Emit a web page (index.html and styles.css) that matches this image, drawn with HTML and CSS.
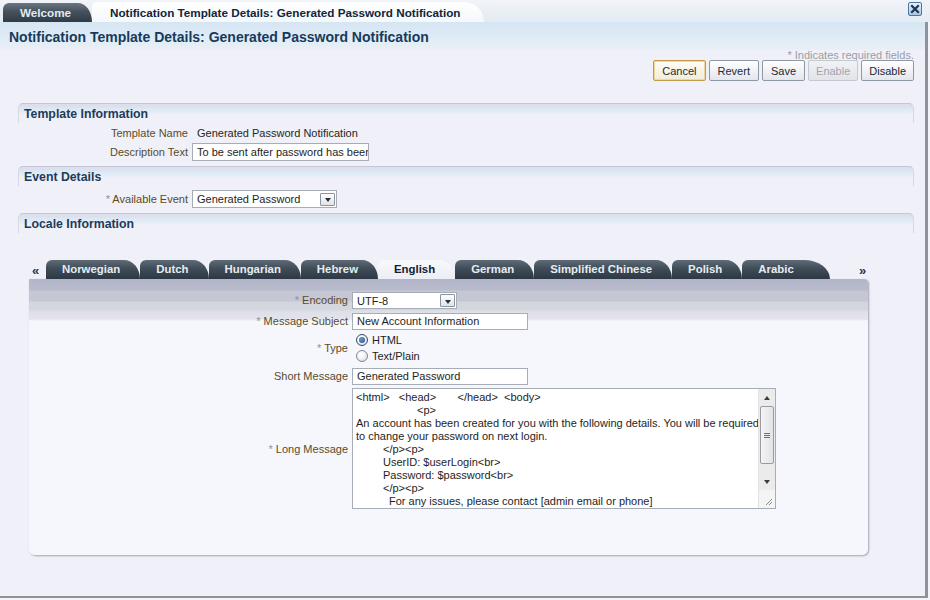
FILE: index.html
```html
<!DOCTYPE html>
<html>
<head>
<meta charset="utf-8">
<title>Notification Template Details</title>
<link rel="stylesheet" href="styles.css">
</head>
<body>
<div class="tabbar">
  <div class="ttab welcome">Welcome</div>
  <div class="ttab current">Notification Template Details: Generated Password Notification</div>
  <div class="closebtn">
    <svg width="14" height="14" viewBox="0 0 14 14">
      <defs><linearGradient id="cg" x1="0" y1="0" x2="0" y2="1"><stop offset="0" stop-color="#eef4fb"/><stop offset="1" stop-color="#a9c3df"/></linearGradient></defs>
      <rect x="0.5" y="0.5" width="13" height="13" rx="1.5" fill="url(#cg)" stroke="#4a77aa"/>
      <path d="M4 4 L10 10 M10 4 L4 10" stroke="#1c3558" stroke-width="2.2" stroke-linecap="square"/>
    </svg>
  </div>
</div>
<div class="main">
  <div class="titleband"><h1>Notification Template Details: Generated Password Notification</h1></div>
  <div class="toolbar">
    <div class="req">* Indicates required fields.</div>
    <div class="buttons">
      <button class="btn focus">Cancel</button>
      <button class="btn wide">Revert</button>
      <button class="btn wide">Save</button>
      <button class="btn disabled">Enable</button>
      <button class="btn">Disable</button>
    </div>
  </div>

  <div class="sect s1">
    <div class="shead">Template Information</div>
    <div class="form f1">
      <div class="lbl">Template Name</div>
      <div class="val">Generated Password Notification</div>
      <div class="lbl">Description Text</div>
      <div class="input desc">To be sent after password has been generated</div>
    </div>
  </div>

  <div class="sect">
    <div class="shead">Event Details</div>
    <div class="form f2">
      <div class="lbl"><span class="star">*</span> Available Event</div>
      <div class="select ev"><span class="seltext">Generated Password</span><span class="dd"><span class="tri"></span></span></div>
    </div>
  </div>

  <div class="sect">
    <div class="shead">Locale Information</div>
  </div>

  <div class="locale">
    <div class="ltabs">
      <div class="nav prev">«</div>
      <div class="ltab">Norwegian</div>
      <div class="ltab">Dutch</div>
      <div class="ltab">Hungarian</div>
      <div class="ltab">Hebrew</div>
      <div class="ltab active">English</div>
      <div class="ltab">German</div>
      <div class="ltab">Simplified Chinese</div>
      <div class="ltab">Polish</div>
      <div class="ltab last">Arabic</div>
      <div class="nav next">»</div>
    </div>
    <div class="panel">
      <div class="pform">
        <div class="lbl"><span class="star">*</span> Encoding</div>
        <div class="select enc"><span class="seltext">UTF-8</span><span class="dd"><span class="tri"></span></span></div>

        <div class="lbl"><span class="star">*</span> Message Subject</div>
        <div class="input subj">New Account Information</div>

        <div class="lbl typelbl"><span class="star">*</span> Type</div>
        <div class="radios">
          <div class="ropt"><span class="radio on"></span><span>HTML</span></div>
          <div class="ropt"><span class="radio"></span><span>Text/Plain</span></div>
        </div>

        <div class="lbl">Short Message</div>
        <div class="input subj">Generated Password</div>

        <div class="lbl"><span class="star">*</span> Long Message</div>
        <div class="textarea">
          <div class="ta-text">
            <div class="ln pre">&lt;html&gt;   &lt;head&gt;       &lt;/head&gt;  &lt;body&gt;</div>
            <div class="ln in1">&lt;p&gt;</div>
            <div class="ln">An account has been created for you with the following details. You will be required</div>
            <div class="ln">to change your password on next login.</div>
            <div class="ln in2">&lt;/p&gt;&lt;p&gt;</div>
            <div class="ln in2">UserID: $userLogin&lt;br&gt;</div>
            <div class="ln in2">Password: $password&lt;br&gt;</div>
            <div class="ln in2">&lt;/p&gt;&lt;p&gt;</div>
            <div class="ln in3">For any issues, please contact [admin email or phone]</div>
          </div>
          <div class="sbar">
            <div class="sbtn"><span class="up"></span></div>
            <div class="track">
              <div class="thumb"><span class="grip"></span></div>
            </div>
            <div class="sbtn"><span class="down"></span></div>
            <div class="corner">
              <svg width="9" height="9" viewBox="0 0 9 9"><path d="M8 2 L2 8 M8 5 L5 8" stroke="#8a8a8a" stroke-width="1"/></svg>
            </div>
          </div>
        </div>
      </div>
    </div>
  </div>
</div>
</body>
</html>
```

FILE: styles.css
```css
* { box-sizing: border-box; }
html, body { margin: 0; padding: 0; }
body {
  width: 930px;
  height: 600px;
  overflow: hidden;
  background: #f3f4f9;
  font-family: "Liberation Sans", Arial, sans-serif;
  font-size: 11px;
  color: #222;
}

/* top tab bar */
.tabbar {
  height: 22px;
  display: flex;
  align-items: flex-end;
  padding-left: 3px;
  background: linear-gradient(#f1f4f9, #e4ebf3);
}
.ttab {
  display: flex;
  align-items: center;
  font-weight: bold;
  white-space: nowrap;
}
.ttab.welcome {
  width: 89px;
  height: 19px;
  padding-left: 17px;
  font-size: 11.7px;
  color: #e2eaf2;
  background: linear-gradient(#6a7682, #45525e 45%, #2f3b47);
  border-radius: 6px 14px 0 0 / 6px 19px 0 0;
}
.ttab.current {
  height: 20px;
  padding: 0 24px 0 18px;
  font-size: 11.7px;
  color: #10263b;
  background: linear-gradient(#ffffff, #f4f7fb);
  border-radius: 5px 20px 0 0 / 5px 20px 0 0;
}
.closebtn {
  margin-left: auto;
  margin-right: 8px;
  align-self: flex-start;
  margin-top: 2px;
  height: 14px;
}
.closebtn svg { display: block; }

/* main area */
.main {
  width: 928px;
  height: 576px;
  background: #eff0f8;
  border-right: 3px solid #8e9299;
  border-bottom: 2px solid #8e9299;
}
.titleband {
  height: 28px;
  padding: 3px 0 0 9px;
  background: linear-gradient(#d5e6f3, #e2edf6 70%, #e9eff7);
}
.titleband h1 {
  margin: 0;
  font-size: 14px;
  line-height: 25px;
  font-weight: bold;
  color: #173a5c;
}
.toolbar {
  display: flex;
  flex-direction: column;
  align-items: flex-end;
  padding-right: 11px;
}
.req {
  height: 10px;
  line-height: 10px;
  font-size: 11px;
  color: #9a9ea6;
}
.buttons {
  display: flex;
  gap: 3px;
}
.btn {
  height: 21px;
  padding: 0 7px;
  font-family: "Liberation Sans", Arial, sans-serif;
  font-size: 11px;
  color: #1c2a38;
  border: 1px solid #8f99a6;
  border-radius: 2px;
  background: linear-gradient(#ffffff, #e3e6eb);
}
.btn.wide { padding: 0 8px; }
.btn.focus {
  padding: 0 8px;
  border-color: #c49a48;
  box-shadow: inset 0 0 0 1px #efd89c;
  background: linear-gradient(#fffdf6, #f1ebd8);
}
.btn.disabled {
  color: #a0a5ad;
  border-color: #c4c9d0;
  background: linear-gradient(#f1f2f5, #e2e4e9);
}

/* sections */
.sect { margin: 0 11px 0 18px; }
.sect.s1 { margin-top: 22px; }
.shead {
  height: 20px;
  padding-left: 5px;
  line-height: 20px;
  font-size: 12.3px;
  font-weight: bold;
  color: #1d3b5a;
  border-top: 1px solid #c4c6d9;
  border-left: 1px solid #d6d8e4;
  border-right: 1px solid #d6d8e4;
  border-radius: 5px 5px 0 0;
  background: linear-gradient(#dcdeec 0, #dee0ee 3px, #d9e8f4 4px, #e3ecf6 8px, #eff0f8 11px);
}
.form {
  display: grid;
  grid-template-columns: 170px auto;
  column-gap: 4px;
  row-gap: 1px;
  justify-items: start;
  align-items: center;
  margin-left: -18px;
  padding-left: 18px;
}
.f1 { padding-top: 1px; padding-bottom: 5px; grid-auto-rows: 18px; }
.f2 { padding-top: 4px; padding-bottom: 5px; grid-auto-rows: 18px; }
.lbl {
  justify-self: end;
  color: #5a4b2a;
  white-space: nowrap;
}
.star { color: #8294a8; }
.val { padding-left: 5px; color: #262626; }

.input {
  height: 18px;
  line-height: 16px;
  padding: 0 4px 0 4px;
  border: 1px solid #a6adb6;
  background: #fff;
  color: #1e1e1e;
  white-space: nowrap;
  overflow: hidden;
}
.input.desc { width: 177px; }
.input.subj { width: 176px; height: 17px; line-height: 15px; margin-top: 1px; }

.select {
  display: flex;
  align-items: center;
  justify-content: space-between;
  height: 18px;
  padding: 0 1px 0 4px;
  border: 1px solid #a6adb6;
  background: #fff;
  color: #1e1e1e;
}
.select.ev { width: 145px; }
.select.enc { width: 105px; height: 17px; margin-top: 1px; }
.dd {
  width: 15px;
  height: 13px;
  display: flex;
  align-items: center;
  justify-content: center;
  border: 1px solid #8c949f;
  border-radius: 1px;
  background: linear-gradient(#ffffff, #dfe3e8);
}
.tri {
  width: 0;
  height: 0;
  margin-top: 2px;
  border-left: 3.5px solid transparent;
  border-right: 3.5px solid transparent;
  border-top: 4px solid #2b2f35;
}

/* locale tabs */
.locale {
  width: 839px;
  margin: 27px 0 0 29px;
}
.ltabs {
  height: 19px;
  display: flex;
  align-items: flex-end;
}
.nav {
  height: 19px;
  font-size: 13px;
  font-weight: bold;
  line-height: 21px;
  color: #24364a;
}
.nav.prev { width: 17px; padding-left: 3px; }
.nav.next { margin-left: auto; width: 9px; margin-right: 0; }
.ltab {
  height: 19px;
  padding: 0 20px 0 16px;
  font-size: 11.4px;
  font-weight: bold;
  line-height: 19px;
  color: #e6ecf2;
  white-space: nowrap;
  background: linear-gradient(#5f6b77, #404c58 45%, #2c3844);
  border-radius: 6px 16px 0 0 / 6px 19px 0 0;
}
.ltab.active {
  color: #102030;
  background: linear-gradient(#f8f9fc, #eceef5);
}
.ltab.last { padding-right: 36px; border-radius: 6px 26px 0 0 / 6px 19px 0 0; }

.panel {
  height: 276px;
  padding-top: 12px;
  border-radius: 0 4px 6px 6px;
  box-shadow: 1px 1px 2px rgba(70, 72, 90, 0.45);
  background: linear-gradient(#b3b6c8 0, #b8bbcc 11px, #c5c7d4 12px, #c5c7d4 22px, #d2d6dd 23px, #d4d7de 31px, #dfe0e7 32px, #e3e4eb 40px, #f6f7fc 42px, #f6f7fc 100%);
}
.pform {
  display: grid;
  grid-template-columns: 319px auto;
  column-gap: 4px;
  row-gap: 3px;
  justify-items: start;
  align-items: center;
}
.pform > .lbl { align-self: center; }
.radios { margin-top: -1px; }
.typelbl { margin-top: -1px; }
.ropt {
  display: flex;
  align-items: center;
  gap: 4px;
  height: 16px;
  padding-left: 4px;
  color: #1e1e1e;
}
.radio {
  width: 12px;
  height: 12px;
  border-radius: 50%;
  border: 1px solid #7e8791;
  background: radial-gradient(circle at 40% 35%, #ffffff 0, #f2f4f6 40%, #cfd5dc 100%);
  display: flex;
  align-items: center;
  justify-content: center;
}
.radio.on { border-color: #3b4b5e; }
.radio.on::after {
  content: "";
  width: 6px;
  height: 6px;
  border-radius: 50%;
  background: radial-gradient(circle at 40% 35%, #6c9bd2, #1f4f8c);
}

.textarea {
  width: 424px;
  height: 121px;
  border: 1px solid #a6adb6;
  background: #fff;
  display: flex;
}
.ta-text {
  flex: 1;
  min-width: 0;
  padding: 2px 0 0 3px;
  overflow: hidden;
  color: #1e1e1e;
}
.ln { height: 13px; line-height: 13px; white-space: nowrap; }
.ln.pre { white-space: pre; }
.ln.in1 { padding-left: 61px; }
.ln.in2 { padding-left: 27px; }
.ln.in3 { padding-left: 33px; }

.sbar {
  width: 17px;
  display: flex;
  flex-direction: column;
  background: #ebebec;
  border-left: 1px solid #e2e2e4;
}
.sbtn {
  height: 17px;
  display: flex;
  align-items: center;
  justify-content: center;
}
.up {
  width: 0; height: 0;
  border-left: 3.5px solid transparent;
  border-right: 3.5px solid transparent;
  border-bottom: 4px solid #3c3c3c;
}
.down {
  width: 0; height: 0;
  border-left: 3.5px solid transparent;
  border-right: 3.5px solid transparent;
  border-top: 4px solid #3c3c3c;
}
.track {
  flex: 1;
  padding: 0 1px;
}
.thumb {
  height: 58px;
  border: 1px solid #999ba0;
  border-radius: 2px;
  background: linear-gradient(90deg, #f4f4f5, #e2e3e5);
  display: flex;
  align-items: center;
  justify-content: center;
}
.grip {
  width: 6px;
  height: 5px;
  border-top: 1px solid #6b6d72;
  border-bottom: 1px solid #6b6d72;
  background: linear-gradient(#6b6d72, #6b6d72) center / 6px 1px no-repeat;
}
.corner {
  height: 18px;
  background: #f4f4f5;
  display: flex;
  align-items: flex-end;
  justify-content: flex-end;
  padding: 0 2px 2px 0;
}
.corner svg { display: block; }
```
